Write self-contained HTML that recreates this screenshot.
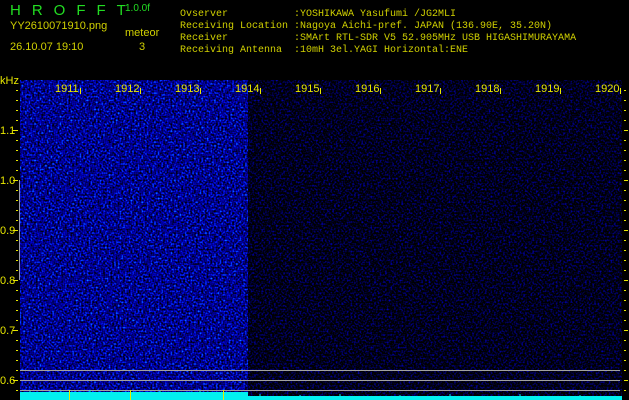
<!DOCTYPE html>
<html><head><meta charset="utf-8"><style>
html,body{margin:0;padding:0;background:#000;width:629px;height:400px;overflow:hidden}
svg{display:block}
text{font-family:"Liberation Sans",sans-serif}
.m{font-family:"Liberation Mono",monospace;font-size:10px;fill:#d0d000}
</style></head><body>
<svg width="629" height="400" viewBox="0 0 629 400" xmlns="http://www.w3.org/2000/svg">
<defs>
<filter id="nl" x="20" y="80" width="228" height="320" filterUnits="userSpaceOnUse" color-interpolation-filters="sRGB">
<feTurbulence type="fractalNoise" baseFrequency="0.55" numOctaves="1" seed="3"/>
<feColorMatrix type="matrix" values="0 0 0 0 0  3 0 0 0 -1.85  2.4 0 0 0 -0.65  0 0 0 0 1"/>
</filter>
<filter id="nr" x="248" y="80" width="374" height="320" filterUnits="userSpaceOnUse" color-interpolation-filters="sRGB">
<feTurbulence type="fractalNoise" baseFrequency="0.55" numOctaves="1" seed="7"/>
<feColorMatrix type="matrix" values="0 0 0 0 0  0 0 0 0 0  2.0 0 0 0 -0.9  0 0 0 0 1"/>
</filter>
</defs>
<rect width="629" height="400" fill="#000"/>
<rect x="20" y="80" width="228" height="320" filter="url(#nl)"/>
<rect x="248" y="80" width="374" height="320" filter="url(#nr)"/>
<!-- header -->
<text x="10" y="15" font-size="15" fill="#22dd22" letter-spacing="11">HROFFT</text>
<text x="125" y="11" font-size="10" fill="#22dd22">1.0.0f</text>
<text x="10" y="29" font-size="11" fill="#d0d000">YY2610071910.png</text>
<text x="125" y="36" font-size="11" fill="#d0d000">meteor</text>
<text x="139" y="50" font-size="11" fill="#d0d000">3</text>
<text x="10" y="50" font-size="11" fill="#d0d000">26.10.07 19:10</text>
<text class="m" x="180" y="16" xml:space="preserve">Ovserver           :YOSHIKAWA Yasufumi /JG2MLI</text>
<text class="m" x="180" y="28" xml:space="preserve">Receiving Location :Nagoya Aichi-pref. JAPAN (136.90E, 35.20N)</text>
<text class="m" x="180" y="40" xml:space="preserve">Receiver           :SMArt RTL-SDR V5 52.905MHz USB HIGASHIMURAYAMA</text>
<text class="m" x="180" y="52" xml:space="preserve">Receiving Antenna  :10mH 3el.YAGI Horizontal:ENE</text>
<!-- y axis -->
<g font-size="11" fill="#e8e800">
<text x="0" y="84">kHz</text>
<text x="0" y="134">1.1</text>
<text x="0" y="184">1.0</text>
<text x="0" y="234">0.9</text>
<text x="0" y="284">0.8</text>
<text x="0" y="334">0.7</text>
<text x="0" y="384">0.6</text>
</g>
<g stroke="#e8e800" stroke-width="1">
<path d="M16 90.5h2M16 100.5h2M16 110.5h2M16 120.5h2M13 130.5h5M16 140.5h2M16 150.5h2M16 160.5h2M16 170.5h2M13 180.5h5M16 190.5h2M16 200.5h2M16 210.5h2M16 220.5h2M13 230.5h5M16 240.5h2M16 250.5h2M16 260.5h2M16 270.5h2M13 280.5h5M16 290.5h2M16 300.5h2M16 310.5h2M16 320.5h2M13 330.5h5M16 340.5h2M16 350.5h2M16 360.5h2M16 370.5h2M13 380.5h5M16 390.5h2"/>
<path d="M624 90.5h2M624 100.5h2M624 110.5h2M624 120.5h2M624 130.5h4M624 140.5h2M624 150.5h2M624 160.5h2M624 170.5h2M624 180.5h4M624 190.5h2M624 200.5h2M624 210.5h2M624 220.5h2M624 230.5h4M624 240.5h2M624 250.5h2M624 260.5h2M624 270.5h2M624 280.5h4M624 290.5h2M624 300.5h2M624 310.5h2M624 320.5h2M624 330.5h4M624 340.5h2M624 350.5h2M624 360.5h2M624 370.5h2M624 380.5h4M624 390.5h2"/>
<path d="M80.5 88v6M140.5 88v6M200.5 88v6M260.5 88v6M320.5 88v6M380.5 88v6M440.5 88v6M500.5 88v6M560.5 88v6M620.5 88v6"/>
</g>
<path d="M19.5 180v100" stroke="#9a9aaa"/>
<g font-size="11" fill="#e8e800">
<text x="55" y="92">1911</text><text x="115" y="92">1912</text><text x="175" y="92">1913</text><text x="235" y="92">1914</text><text x="295" y="92">1915</text><text x="355" y="92">1916</text><text x="415" y="92">1917</text><text x="475" y="92">1918</text><text x="535" y="92">1919</text><text x="595" y="92">1920</text>
</g>
<g stroke="#a0a0a0"><path d="M20 370.5h600M20 380.5h600M20 390.5h600"/></g>
<rect x="20" y="392" width="228" height="8" fill="#00f0f0"/>
<rect x="248" y="396" width="374" height="4" fill="#00f0f0"/>
<g stroke="#00f0f0"><path d="M30 391v1M50 391v1M90 390v2M160 391v1M200 391v1M260 394v2M300 395v1M340 394v2M400 395v1M450 394v2M520 394v2M580 395v1"/></g>
<g stroke="#e8e800"><path d="M69.5 390v10M130.5 390v10M223.5 390v10"/></g>
</svg>
</body></html>
